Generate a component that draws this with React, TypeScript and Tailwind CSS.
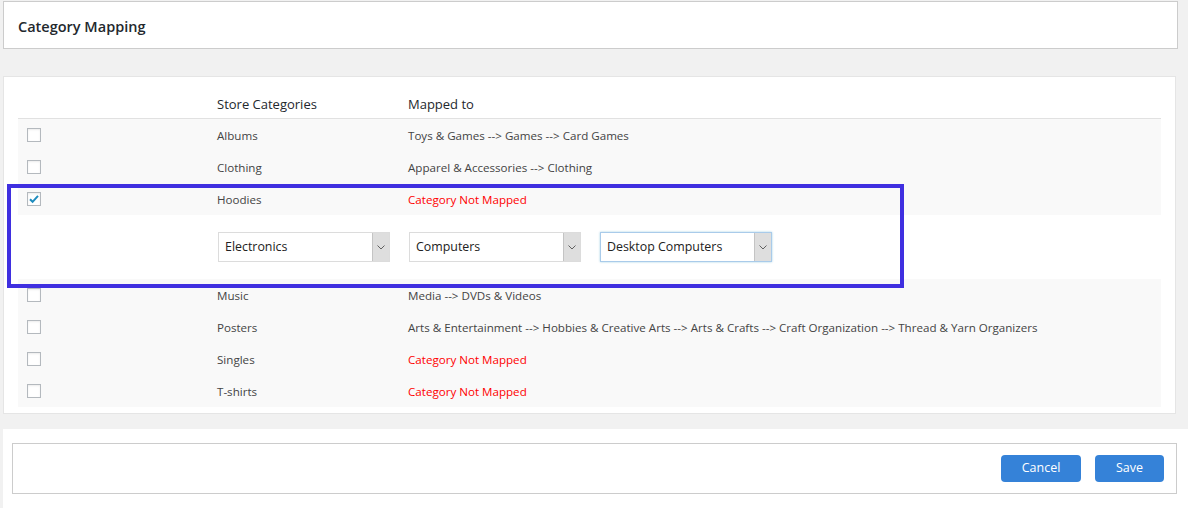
import React from "react";

const font = { fontFamily: '"Open Sans", "Noto Sans", sans-serif' };

function Checkbox({ checked = false }: { checked?: boolean }) {
  return (
    <div className="w-[14px] h-[14px] border border-[#b4b9be] bg-white flex items-center justify-center shadow-[inset_0_1px_2px_rgba(0,0,0,0.08)]">
      {checked && (
        <svg width="12" height="12" viewBox="0 0 12 12">
          <path d="M2 6.2 L4.6 8.8 L10 2.8" fill="none" stroke="#1e8cbe" strokeWidth="2" />
        </svg>
      )}
    </div>
  );
}

function Select({ label, focused = false }: { label: string; focused?: boolean }) {
  return (
    <div
      className={`w-[172px] h-[30px] flex items-stretch bg-white border ${
        focused ? "border-[#a9cbea] shadow-[0_0_2px_rgba(30,140,190,0.4)]" : "border-[#dcdcdc]"
      }`}
    >
      <div className="flex-1 flex items-center pl-[6px] pt-[1px] text-[12.4px] text-[#222]">{label}</div>
      <div className="w-[17px] bg-[#dedede] border-l border-[#c4c4c4] flex items-center justify-center">
        <svg width="8" height="5" viewBox="0 0 8 5">
          <path d="M0.5 0.5 L4 4 L7.5 0.5" fill="none" stroke="#606060" strokeWidth="1" />
        </svg>
      </div>
    </div>
  );
}

type Row = { name: string; mapped: string; checked?: boolean };

const rowsTop: Row[] = [
  { name: "Albums", mapped: "Toys & Games --> Games --> Card Games" },
  { name: "Clothing", mapped: "Apparel & Accessories --> Clothing" },
  { name: "Hoodies", mapped: "", checked: true },
];
const rowsBottom: Row[] = [
  { name: "Music", mapped: "Media --> DVDs & Videos" },
  {
    name: "Posters",
    mapped:
      "Arts & Entertainment --> Hobbies & Creative Arts --> Arts & Crafts --> Craft Organization --> Thread & Yarn Organizers",
  },
  { name: "Singles", mapped: "" },
  { name: "T-shirts", mapped: "" },
];

function TableRow({ row }: { row: Row }) {
  return (
    <div className="h-[32px] bg-[#f9f9f9] flex items-center text-[11.6px]">
      <div className="w-[199px] pl-[9px] flex items-center">
        <Checkbox checked={row.checked} />
      </div>
      <div className="w-[191px] text-[#444] pt-[1px]">{row.name}</div>
      <div className={`pt-[1px] ${row.mapped ? "text-[#444]" : "text-[#ff0000]"}`}>
        {row.mapped || "Category Not Mapped"}
      </div>
    </div>
  );
}

export default function App() {
  return (
    <div className="relative w-[1188px] h-[508px] bg-[#f1f1f1] overflow-hidden pt-[1px]" style={font}>
      {/* Header */}
      <div className="ml-[3px] w-[1175px] h-[48px] bg-white border border-[#cccccc] flex items-center pl-[14px] pt-[3px]">
        <span className="text-[14.5px] font-semibold text-[#23282d]">Category Mapping</span>
      </div>

      {/* Main panel */}
      <div className="mt-[27px] ml-[3px] w-[1173px] h-[338px] bg-white border border-[#e5e5e5] pt-[11px] px-[14px]">
        <div className="h-[31px] border-b border-[#e1e1e1] flex items-center text-[13px] text-[#23282d] pt-[3px]">
          <div className="w-[199px]" />
          <div className="w-[191px]">Store Categories</div>
          <div>Mapped to</div>
        </div>
        {rowsTop.map((r) => (
          <TableRow key={r.name} row={r} />
        ))}
        <div className="h-[64px] bg-white flex items-center pl-[200px] gap-[19px]">
          <Select label="Electronics" />
          <Select label="Computers" />
          <Select label="Desktop Computers" focused />
        </div>
        {rowsBottom.map((r) => (
          <TableRow key={r.name} row={r} />
        ))}
      </div>

      {/* Footer */}
      <div className="mt-[15px] ml-[3px] h-[80px] bg-white pt-[14px] pl-[9px]">
        <div className="w-[1165px] h-[51px] border border-[#cccccc] flex items-center justify-end gap-[14px] pr-[12px]">
          <button className="w-[80px] h-[27px] rounded-[4px] bg-[#3582d8] text-white text-[12.5px]">Cancel</button>
          <button className="w-[69px] h-[27px] rounded-[4px] bg-[#3582d8] text-white text-[12.5px]">Save</button>
        </div>
      </div>

      {/* Annotation highlight */}
      <div className="absolute left-[7px] top-[184px] w-[897px] h-[104px] border-[4px] border-[#3f2fe0] pointer-events-none" />
    </div>
  );
}
